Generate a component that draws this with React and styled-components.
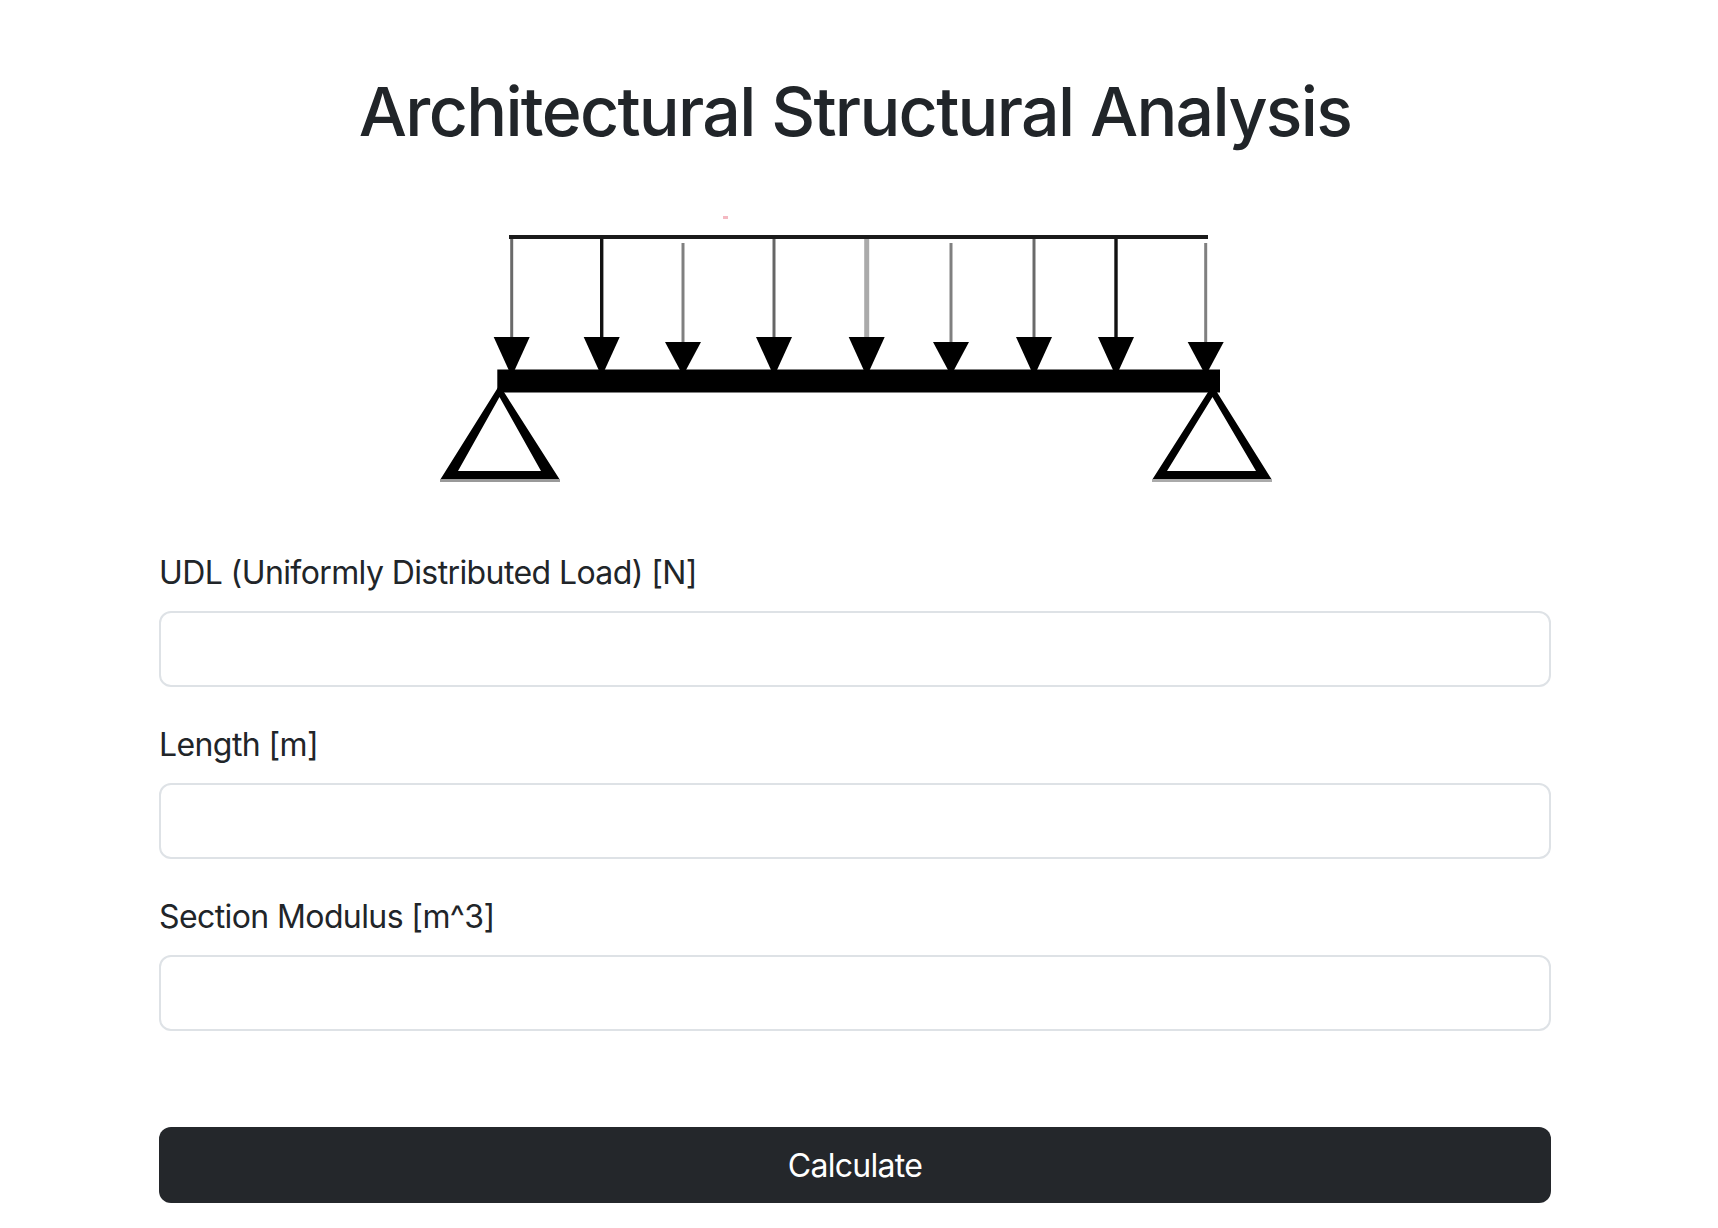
import React from "react";
import styled, { createGlobalStyle } from "styled-components";

const GlobalStyle = createGlobalStyle`
  * {
    box-sizing: border-box;
  }

  body {
    margin: 0;
    background: #fff;
    color: #212529;
    font-family: Inter, "Liberation Sans", sans-serif;
  }
`;

const Page = styled.main`
  height: 1228px;
  padding: 69px 167px 0 159px;
  overflow: hidden;
`;

const Title = styled.h1`
  margin: 0;
  font-size: 68px;
  font-weight: 500;
  line-height: 84px;
  text-align: center;
  letter-spacing: -1.7px;
`;

const Diagram = styled.svg`
  display: block;
  width: 850px;
  height: 280px;
  margin: 57px auto 59px;
  filter: blur(0.75px);
`;

const Field = styled.div`
  margin-bottom: 34px;
`;

const Label = styled.label`
  display: block;
  margin-bottom: 14px;
  font-size: 32px;
  line-height: 48px;
  letter-spacing: -0.6px;
`;

const Input = styled.input`
  display: block;
  width: 100%;
  height: 76px;
  border: 2px solid #dee2e6;
  border-radius: 12px;
  background: #fff;
  outline: none;
`;

const SubmitButton = styled.button`
  display: block;
  width: 100%;
  height: 76px;
  margin-top: 96px;
  border: none;
  border-radius: 12px;
  background: #24272b;
  color: #fff;
  font-family: inherit;
  font-size: 32px;
  letter-spacing: -0.7px;
`;

// x of shaft, how far down the shaft starts, head top, stroke, colour
const arrows = [
  { x: 511.7, from: 239, head: 337, width: 3, color: "#6a6a6a" },
  { x: 601.7, from: 239, head: 337, width: 3.4, color: "#111" },
  { x: 683, from: 243, head: 342, width: 3, color: "#808080" },
  { x: 774, from: 239, head: 337, width: 3, color: "#666" },
  { x: 866.7, from: 239, head: 337, width: 5, color: "#aaa" },
  { x: 951, from: 243, head: 342, width: 3, color: "#808080" },
  { x: 1034, from: 239, head: 337, width: 3, color: "#6a6a6a" },
  { x: 1116, from: 239, head: 337, width: 3.4, color: "#111" },
  { x: 1205.7, from: 243, head: 342, width: 3, color: "#808080" },
];

const triangle = (cx, left, right, inLeft, inRight) =>
  `M${cx} 385L${right} 480H${left}Z M${cx} 397L${inLeft} 471H${inRight}Z`;

const BeamDiagram = () => (
  <Diagram viewBox="430 210 850 280" aria-label="Simply supported beam with a uniformly distributed load">
    <rect x="723" y="216" width="5" height="3" fill="#f4b9c2" />
    <rect x="509" y="235" width="699" height="4" fill="#1a1a1a" />
    {arrows.map((arrow) => (
      <g key={arrow.x}>
        <line
          x1={arrow.x}
          x2={arrow.x}
          y1={arrow.from}
          y2={arrow.head + 4}
          stroke={arrow.color}
          strokeWidth={arrow.width}
        />
        <path
          d={`M${arrow.x - 18} ${arrow.head}H${arrow.x + 18}L${arrow.x + 3} 370H${arrow.x - 3}Z`}
          fill="#000"
        />
      </g>
    ))}
    <rect x="497.3" y="369.5" width="722.7" height="23" fill="#000" />
    <path d={triangle(499.5, 440, 560, 541, 458)} fill="#000" fillRule="evenodd" />
    <path d={triangle(1212.5, 1152, 1272, 1256, 1167)} fill="#000" fillRule="evenodd" />
    <rect x="440" y="479" width="120" height="3" fill="#999" />
    <rect x="1152" y="479" width="120" height="3" fill="#aaa" />
  </Diagram>
);

const fields = [
  { id: "udl", label: "UDL (Uniformly Distributed Load) [N]" },
  { id: "length", label: "Length [m]" },
  { id: "modulus", label: "Section Modulus [m^3]" },
];

const App = () => (
  <>
    <GlobalStyle />
    <Page>
      <Title>Architectural Structural Analysis</Title>
      <BeamDiagram />
      <form onSubmit={(e) => e.preventDefault()}>
        {fields.map((field) => (
          <Field key={field.id}>
            <Label htmlFor={field.id}>{field.label}</Label>
            <Input id={field.id} type="text" />
          </Field>
        ))}
        <SubmitButton type="submit">Calculate</SubmitButton>
      </form>
    </Page>
  </>
);

export default App;
